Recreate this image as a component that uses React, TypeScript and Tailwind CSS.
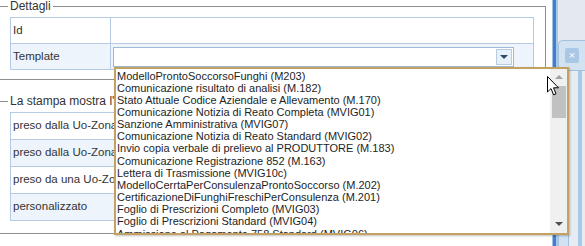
import React from 'react';

const templates = [
  'ModelloProntoSoccorsoFunghi (M203)',
  'Comunicazione risultato di analisi (M.182)',
  'Stato Attuale Codice Aziendale e Allevamento (M.170)',
  'Comunicazione Notizia di Reato Completa (MVIG01)',
  'Sanzione Amministrativa (MVIG07)',
  'Comunicazione Notizia di Reato Standard (MVIG02)',
  'Invio copia verbale di prelievo al PRODUTTORE (M.183)',
  'Comunicazione Registrazione 852 (M.163)',
  'Lettera di Trasmissione (MVIG10c)',
  'ModelloCerrtaPerConsulenzaProntoSoccorso (M.202)',
  'CertificazioneDiFunghiFreschiPerConsulenza (M.201)',
  'Foglio di Prescrizioni Completo (MVIG03)',
  'Foglio di Prescrizioni Standard (MVIG04)',
  'Ammissione al Pagamento 758 Standard (MVIG06)',
];

const stampaRows = [
  'preso dalla Uo-Zona di appartenenza',
  'preso dalla Uo-Zona selezionata',
  'preso da una Uo-Zona a scelta',
  'personalizzato',
];

const TemplateDropdown: React.FC = () => (
  <div className="absolute left-0 top-[19px] z-10 flex h-[168px] w-[455px] border-2 border-[#c2a163] bg-white shadow-[1px_1px_2px_rgba(0,0,0,0.25)]">
    <ul className="flex-1 overflow-hidden pl-[1px] pt-[1px] text-[11px] leading-[12.15px] text-[#1e1e1e]">
      {templates.map((t) => (
        <li key={t} className="whitespace-nowrap">{t}</li>
      ))}
    </ul>
    <div className="flex w-[17px] flex-col bg-[#f0f0f0]">
      <div className="flex h-[17px] items-center justify-center">
        <span className="h-0 w-0 border-x-[4px] border-b-[4px] border-x-transparent border-b-[#a3a3a3]" />
      </div>
      <div className="ml-[2px] mr-[1px] h-[32px] bg-[#c1c1c1]" />
      <div className="flex-1" />
      <div className="flex h-[17px] items-center justify-center">
        <span className="h-0 w-0 border-x-[4px] border-t-[4px] border-x-transparent border-t-[#505050]" />
      </div>
    </div>
  </div>
);

const Cursor: React.FC = () => (
  <svg className="absolute left-[547px] top-[76px] z-20" width="13" height="20" viewBox="0 0 13 20">
    <path d="M0.5 0.5 L0.5 16 L4 12.6 L6.6 18.8 L9 17.8 L6.5 11.8 L11.5 11.8 Z" fill="#fff" stroke="#000" strokeWidth="1" strokeLinejoin="miter" />
  </svg>
);

export default function App() {
  return (
    <div className="relative flex h-[246px] w-[585px] overflow-hidden bg-white font-['Liberation_Sans',Arial,sans-serif] text-[11.5px] text-[#333]">
      <div className="-ml-1 w-[556px] shrink-0 pr-[6px]">
        <fieldset className="border border-[#8f8f8f]">
          <legend className="ml-[11px] px-[2px] text-[12px] leading-[12px] text-[#333]">Dettagli</legend>
          <div className="pb-[9px] pl-[13px] pr-[11px] pt-[5px]">
            <table className="w-full border-collapse">
              <tbody>
                <tr className="h-[26px] bg-white">
                  <td className="w-[100px] border border-[#b4cbe3] pl-[2px]">Id</td>
                  <td className="border border-[#b4cbe3]" />
                </tr>
                <tr className="h-[26px] bg-[#edf4fb]">
                  <td className="border border-[#b4cbe3] pl-[2px]">Template</td>
                  <td className="border border-[#b4cbe3] pl-[2px] align-middle">
                    <div className="relative flex h-[20px] w-[401px] border border-[#9fb8d4] bg-white">
                      <div className="flex-1" />
                      <div className="my-[1px] mr-[1px] flex w-[16px] items-center justify-center border border-[#b7cde4] bg-[#e8f0f9]">
                        <span className="h-0 w-0 border-x-[4px] border-t-[4px] border-x-transparent border-t-[#2d4a6b]" />
                      </div>
                      <TemplateDropdown />
                    </div>
                  </td>
                </tr>
              </tbody>
            </table>
          </div>
        </fieldset>

        <fieldset className="mt-[15px] border border-[#8f8f8f]">
          <legend className="ml-[11px] px-[2px] text-[12px] leading-[12px] text-[#333]">La stampa mostra l'intestazione</legend>
          <div className="pb-[12px] pl-[13px] pr-[11px] pt-[5px]">
            <table className="w-full border-collapse">
              <tbody>
                {stampaRows.map((r, i) => (
                  <tr key={r} className={`h-[27px] ${i % 2 === 1 ? 'bg-[#edf4fb]' : 'bg-white'}`}>
                    <td className="w-[220px] whitespace-nowrap border border-[#b4cbe3] pl-[2px]">{r}</td>
                    <td className="border border-[#b4cbe3]" />
                  </tr>
                ))}
              </tbody>
            </table>
          </div>
        </fieldset>
      </div>

      <div className="flex flex-1">
        <div className="w-[1px] bg-[#9fc0e2]" />
        <div className="w-[3px] bg-[#3f7fcc]" />
        <div className="w-[2px] bg-[#a8c8ea]" />
        <div className="flex-1 bg-[#e3e9ef] pt-[40px]">
          <div className="flex h-full flex-col rounded-tl-[5px] border-l border-t border-[#a3c1df] bg-[#d3e2f0]">
            <div className="ml-[6px] mt-[7px] flex h-[15px] w-[14px] items-center justify-center rounded-[2px] bg-[#a9c8e6] text-[11px] leading-none text-white">
              ×
            </div>
            <div className="ml-[9px] mt-[7px] flex flex-1 border-l border-t border-[#a3c1df] bg-[#e6ecf2]">
              <div className="w-[9px]" />
              <div className="w-[4px] bg-[#a9c9e8]" />
            </div>
          </div>
        </div>
      </div>

      <Cursor />
    </div>
  );
}
